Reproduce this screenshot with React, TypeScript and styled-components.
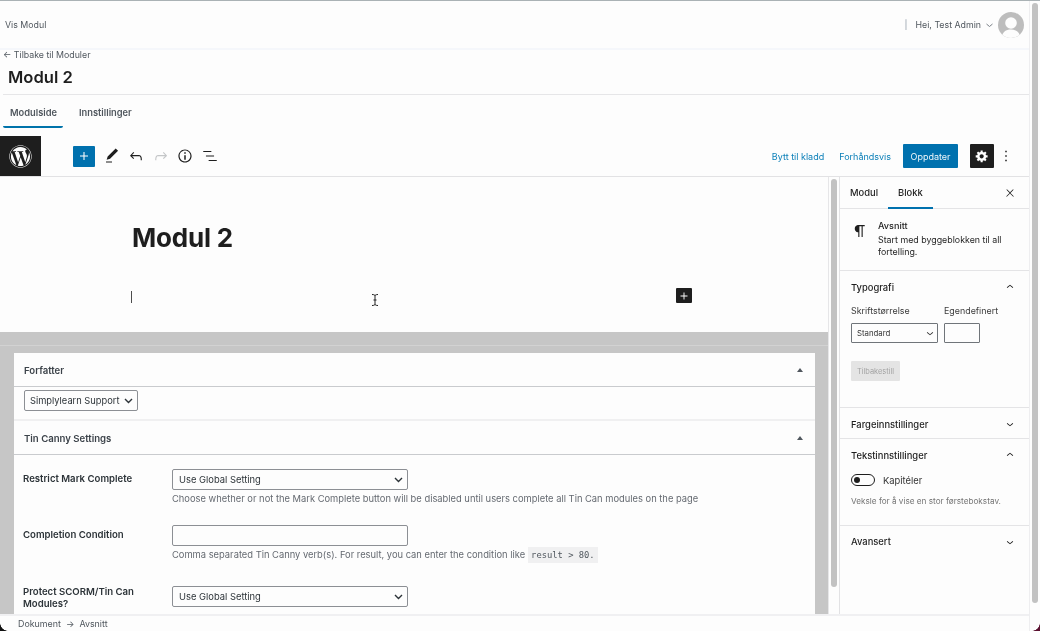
import React from "react";
import styled, { createGlobalStyle } from "styled-components";
import { FaWordpress } from "react-icons/fa";

const Global = createGlobalStyle`
  html, body { margin: 0; padding: 0; background: #fdfdfd; }
  * { box-sizing: border-box; }
  body { font-family: Inter, "Noto Sans", "Liberation Sans", sans-serif; color: #1e1e1e; }
`;

const Shell = styled.div`
  position: relative; width: 1040px; height: 631px; overflow: hidden;
  display: flex; background: #fdfdfd; border-top: 1px solid #aab2b5;
  filter: blur(0.3px);
`;
const Main = styled.div`
  width: 1030px; height: 630px; display: flex; flex-direction: column;
  border-right: 1px solid #eeeef0;
`;
const PageScroll = styled.div`width: 10px; padding: 2px 2px 0 2px;`;
const ScrollThumb = styled.div<{ $h: number }>`
  width: 6px; height: ${p => p.$h}px; background: #c2c2c2; border-radius: 3px;
`;
const TopBar = styled.header`
  height: 49px; flex: none; display: flex; align-items: center; padding: 0 5px;
  font-size: 8.8px; color: #50575e; border-bottom: 2px solid #f5f7fb;
`;
const TopTitle = styled.span`flex: 1;`;
const Pipe = styled.span`color: #8c98a4; margin-right: 8px; font-size: 9px;`;
const Caret = styled.svg`margin: 1px 5px 0 5px; color: #7b8188;`;
const Avatar = styled.svg`display: block; border-radius: 50%;`;
const BackLink = styled.div`
  height: 12px; flex: none; padding: 0 0 0 3px; font-size: 8.8px; line-height: 9px; color: #50575e;
`;
const PostTitle = styled.h1`
  margin: 0 0 0 3px; padding: 3px 0 0 5px; height: 33px; flex: none;
  font-size: 16.6px; line-height: 24px; font-weight: 600; color: #1e1e1e;
  border-bottom: 1px solid #e6e6e8;
`;
const Tabs = styled.nav`
  height: 33px; flex: none; display: flex; padding-left: 3px;
`;
const Tab = styled.div<{ $active?: boolean }>`
  height: 33px; padding: 12px 7px 0; margin-right: 9px; font-size: 9.3px; line-height: 12px; font-weight: 600;
  color: #50575e; width: ${p => (p.$active ? "60px" : "auto")};
  border-bottom: 2px solid ${p => (p.$active ? "#0073aa" : "transparent")};
  border-radius: 0 0 2px 2px;
`;
const Toolbar = styled.div`
  margin-top: 8px; height: 41px; flex: none; display: flex; align-items: center;
  border-bottom: 1px solid #e2e2e4;
`;
const Logo = styled.div`
  width: 41px; height: 40px; background: #1e1e1e; color: #fdfdfd;
  display: flex; align-items: center; justify-content: center; margin-right: 32px;
`;
const Inserter = styled.div`
  width: 22px; height: 21px; background: #0071ae; color: #fff; border-radius: 1px;
  display: flex; align-items: center; justify-content: center; margin-right: 8px;
`;
const ToolIcon = styled.span<{ $muted?: boolean }>`
  width: 18px; height: 18px; display: flex; margin-right: 6.4px;
  color: ${p => (p.$muted ? "#c4c6c8" : "#1e1e1e")};
`;
const Spacer = styled.div`flex: 1;`;
const LinkBtn = styled.span`font-size: 9px; color: #0a7fb8; margin-right: 15px;`;
const Primary = styled.span`
  width: 55px; height: 24px; background: #0071ae; color: #eef6fa; border-radius: 1px; font-size: 9px;
  display: flex; align-items: center; justify-content: center; margin: 0 12px 0 -3px;
`;
const GearBtn = styled.span`
  width: 24px; height: 24px; background: #1e1e1e; color: #fff; border-radius: 1px;
  display: flex; align-items: center; justify-content: center; margin-right: 3px;
`;
const Kebab = styled.span`width: 18px; height: 18px; display: flex; margin-right: 14px; color: #1e1e1e;`;
const Workspace = styled.div`flex: 1; min-height: 0; display: flex;`;
const EditorCol = styled.div`width: 829px; flex: none; overflow: hidden; border-right: 1px solid #e6e6e8; display: flex; flex-direction: column;`;
const Canvas = styled.div`height: 155px; flex: none; position: relative; padding: 47px 0 0 132px;`;
const EditorTitle = styled.h2`
  margin: 0; font-size: 26px; line-height: 28px; font-weight: 700; color: #1e1e1e; letter-spacing: -0.2px;
`;
const TextCaret = styled.div`position: absolute; left: 131px; top: 114px; width: 1px; height: 12px; background: #4d4d4d;`;
const IBeam = styled.svg`position: absolute; left: 371px; top: 117px;`;
const BlockPlus = styled.div`
  position: absolute; left: 676px; top: 111px; width: 16px; height: 15px; background: #1e1e1e; color: #fff;
  border-radius: 1px; display: flex; align-items: center; justify-content: center;
`;
const Metaboxes = styled.div`
  flex: 1; min-height: 0; background: #c6c6c6; padding: 21px 14px 0; overflow: hidden; position: relative;
`;
const MetaLine = styled.div`position: absolute; left: 0; right: 0; top: 13px; height: 1px; background: #d2d2d2;`;
const Card = styled.section`background: #fdfdfd; width: 801px; position: relative;`;
const CardHead = styled.div`
  height: 34px; display: flex; align-items: center; justify-content: space-between; padding: 1px 12px 0 10px;
  font-size: 9.6px; font-weight: 600; color: #3c434a; border-bottom: 1px solid #c9cbce;
`;
const Triangle = styled.i`
  width: 0; height: 0; border: 3px solid transparent; border-top: 0; border-bottom: 4px solid #50575e;
`;
const AuthorBody = styled.div`height: 34px; padding: 3px 10px; border-bottom: 2px solid #f0f0f1;`;
const SelectBox = styled.div<{ $w: number; $h?: number }>`
  width: ${p => p.$w}px; height: ${p => p.$h ?? 21}px; border: 1px solid #8c8f94; border-radius: 2px;
  background: #fdfdfd; display: flex; align-items: center; justify-content: space-between;
  padding: 0 4px 0 6px; font-size: 9.4px; color: #2c3338;
`;
const AuthorSelect = styled(SelectBox)`padding-left: 5px; font-size: 9.3px;`;
const Fields = styled.div`padding: 14px 9px 0;`;
const Field = styled.div<{ $h: number }>`
  display: grid; grid-template-columns: 149px 1fr; height: ${p => p.$h}px;
`;
const FieldLabel = styled.div<{ $top?: number }>`
  font-size: 9.6px; line-height: 12px; font-weight: 600; color: #2c3338; padding-top: ${p => p.$top ?? 4}px; width: 122px;
`;
const TextBox = styled.div`width: 236px; height: 21px; border: 1px solid #8c8f94; border-radius: 2px;`;
const Help = styled.p`margin: 2px 0 0; font-size: 9.35px; line-height: 14px; color: #646970;`;
const Code = styled.code`
  font-family: "DejaVu Sans Mono", "Liberation Mono", monospace; font-size: 8.8px; background: #f0f0f1;
  padding: 3px 3px; margin-left: 3px; color: #50575e;
`;
const Sidebar = styled.aside`
  width: 200px; flex: none; display: flex; flex-direction: column; background: #fdfdfd;
`;
const SideRow = styled.div`display: flex; flex: 1; min-height: 0;`;
const SideScrollTrack = styled.div`width: 10px; flex: none; padding: 2px 2px 0 2px;`;
const SideInner = styled.div`flex: 1; border-left: 1px solid #e2e2e4;`;
const SideTabs = styled.div`
  height: 32px; display: flex; align-items: center; padding: 0 10px; border-bottom: 1px solid #e4e4e6;
`;
const SideTab = styled.div<{ $active?: boolean }>`
  font-size: 9.4px; font-weight: 500; color: #1e1e1e; height: 32px; line-height: 32px; flex: none;
  padding: 0 10px; margin-left: ${p => (p.$active ? "0" : "-10px")};
  border-bottom: ${p => (p.$active ? "2px solid #0071ae" : "none")};
  width: ${p => (p.$active ? "45px" : "auto")};
`;
const CloseIcon = styled.span`margin-left: auto; width: 12px; height: 12px; display: flex; margin-right: 3px;`;
const BlockCard = styled.div`height: 62px; display: flex; padding: 11px 11px 0; border-bottom: 1px solid #e4e4e6;`;
const BlockIcon = styled.span`width: 18px; height: 18px; margin: 2px 9px 0 0; display: flex;`;
const BlockTitle = styled.div`font-size: 9.1px; line-height: 11px; font-weight: 500; margin-bottom: 3px;`;
const BlockDesc = styled.div`font-size: 8.85px; line-height: 12px; color: #1e1e1e; width: 135px;`;
const Panel = styled.div<{ $h: number }>`height: ${p => p.$h}px; border-bottom: 1px solid #e4e4e6; padding: 0 11px;`;
const PanelHead = styled.div`
  height: 31px; display: flex; align-items: center; justify-content: space-between; padding-top: 1px;
  font-size: 9.4px; font-weight: 500; color: #1e1e1e;
`;
const LastHead = styled(PanelHead)`padding: 0 11px;`;
const Chevron = styled.span`width: 14px; height: 14px; display: flex; margin-right: 1px;`;
const FontRow = styled.div`display: flex; gap: 6px; margin-top: 3px;`;
const FontCol = styled.div`display: flex; flex-direction: column;`;
const SmallLabel = styled.label`font-size: 8.9px; line-height: 12px; color: #3c3c3c; margin-bottom: 6px;`;
const FontSelect = styled.div`
  width: 87px; height: 20px; border: 1px solid #70757a; border-radius: 1px; font-size: 7.8px; color: #333;
  display: flex; align-items: center; justify-content: space-between; padding: 0 0 0 5px;
`;
const FontInput = styled.div`width: 36px; height: 20px; border: 1px solid #70757a; border-radius: 1px;`;
const ResetBtn = styled.div`
  margin-top: 18px; width: 49px; height: 20px; background: #e4e4e4; color: #a4a4a4; border-radius: 1px;
  font-size: 7.4px; display: flex; align-items: center; justify-content: center;
`;
const ToggleRow = styled.div`display: flex; align-items: center; gap: 8px; margin-top: 4px; font-size: 9.4px; color: #333;`;
const Toggle = styled.div`
  width: 24px; height: 12px; border: 1px solid #1e1e1e; border-radius: 6px; position: relative; background: #fdfdfd;
`;
const Knob = styled.i`position: absolute; left: 2px; top: 2px; width: 6px; height: 6px; border-radius: 50%; background: #1e1e1e;`;
const PanelHelp = styled.p`margin: 10px 0 0; font-size: 8.2px; line-height: 11px; color: #757575;`;
const StatusBar = styled.footer`
  height: 17px; flex: none; background: #fdfdfd; border-top: 2px solid #f0f0f2; padding-left: 18px;
  display: flex; align-items: center; font-size: 8.9px; color: #50575e; gap: 5px;
`;
const Corner = styled.i<{ $right?: boolean }>`
  position: absolute; bottom: 0; width: 8px; height: 8px;
  ${p => (p.$right
    ? `right: 0; background: radial-gradient(circle at 0 0, transparent 7.5px, #5a1030 8px);`
    : `left: 0; background: radial-gradient(circle at 100% 0, transparent 7.5px, #111 8px);`)}
`;

type IconProps = { d: string; size?: number; box?: number };
const Icon = ({ d, size = 18, box = 24 }: IconProps) => (
  <svg width={size} height={size} viewBox={`0 0 ${box} ${box}`} fill="currentColor"><path d={d} /></svg>
);
const P = {
  plus: "M18 11.2h-5.2V6h-1.6v5.2H6v1.6h5.2V18h1.6v-5.2H18z",
  edit: "M20.1 5.1L16.9 2 6.2 12.7l-1.3 4.4 4.5-1.3L20.1 5.1zM4 20.8h8v-1.5H4v1.5z",
  undo: "M18.3 11.7c-.6-.6-1.4-.9-2.3-.9H6.7l2.9-3.3-1.1-1-4.5 5L8.5 16l1-1-2.7-2.7H16c.5 0 .9.2 1.3.5 1 1 1 3.4 1 4.5v.3h1.5v-.2c0-1.5 0-4.3-1.5-5.7z",
  redo: "M15.6 6.5l-1.1 1 2.9 3.3H8c-.9 0-1.7.3-2.3.9-1.4 1.5-1.4 4.2-1.4 5.6v.2h1.5v-.3c0-1.1 0-3.5 1-4.5.3-.3.7-.5 1.3-.5h9.2L14.5 15l1.1 1.1 4.6-4.6-4.6-5z",
  info: "M12 3.2c-4.8 0-8.8 3.9-8.8 8.8 0 4.8 3.9 8.8 8.8 8.8 4.8 0 8.8-3.9 8.8-8.8 0-4.8-4-8.8-8.8-8.8zm0 16c-4 0-7.2-3.3-7.2-7.2C4.8 8 8 4.8 12 4.8s7.2 3.3 7.2 7.2c0 4-3.2 7.2-7.2 7.2zM11 17h2v-6h-2v6zm0-8h2V7h-2v2z",
  list: "M13.8 5.2H3v1.5h10.8V5.2zm-3.6 12v1.5H21v-1.5H10.2zm7.2-6H6.6v1.5h10.8v-1.5z",
  cog: "M18 12h-2.18c-.17.7-.44 1.35-.81 1.93l1.54 1.54-2.1 2.1-1.54-1.54c-.58.36-1.23.63-1.91.79V19H8v-2.18c-.68-.16-1.33-.43-1.91-.79l-1.54 1.54-2.12-2.12 1.54-1.54c-.36-.58-.63-1.23-.79-1.91H1V9.03h2.17c.16-.7.44-1.35.8-1.94L2.43 5.55l2.1-2.1 1.54 1.54c.58-.37 1.24-.64 1.93-.81V2h3v2.18c.68.16 1.33.43 1.91.79l1.54-1.54 2.12 2.12-1.54 1.54c.36.59.64 1.24.8 1.94H18V12zm-8.5 1.5c1.66 0 3-1.34 3-3s-1.34-3-3-3-3 1.34-3 3 1.34 3 3 3z",
  more: "M13 19h-2v-2h2v2zm0-6h-2v-2h2v2zm0-6h-2V5h2v2z",
  close: "M13 11.8l6.1-6.3-1-1-6.1 6.2-6.1-6.2-1 1 6.1 6.3-6.5 6.7 1 1 6.5-6.6 6.5 6.6 1-1z",
  para: "M18.3 4H9.9v-.1l-.9.2c-2.3.4-4 2.4-4 4.8s1.7 4.4 4 4.8l.7.1V20h1.5V5.5h2.9V20h1.5V5.5h2.7V4z",
  up: "M6.5 12.4L12 8l5.5 4.4-.9 1.2L12 10l-4.5 3.6-1-1.2z",
  down: "M17.5 11.6L12 16l-5.5-4.4.9-1.2L12 14l4.5-3.6 1 1.2z",
};

const Up = () => <Chevron><Icon d={P.up} size={14} /></Chevron>;
const Down = () => <Chevron><Icon d={P.down} size={14} /></Chevron>;
const SelectChevron = () => (
  <svg width="9" height="6" viewBox="0 0 9 6" fill="none" stroke="#2c3338" strokeWidth="1.4"><path d="M1 1l3.500 3.500L8 1" /></svg>
);

export default function App() {
  return (
    <>
      <Global />
      <Shell>
        <Main>
          <TopBar>
            <TopTitle>Vis Modul</TopTitle>
            <Pipe>|</Pipe>
            <span>Hei, Test Admin</span>
            <Caret width="7" height="5" viewBox="0 0 7 5" fill="none" stroke="currentColor"><path d="M.5 1l3 2.500L6.500 1" /></Caret>
            <Avatar width="26" height="26" viewBox="0 0 26 26">
              <rect width="26" height="26" fill="#bdbdbd" />
              <circle cx="13" cy="11" r="5.8" fill="#fdfdfd" />
              <path d="M3.500 26c.5-6 4.500-8.500 9.500-8.500s9 2.500 9.500 8.500z" fill="#fdfdfd" />
            </Avatar>
          </TopBar>
          <BackLink>← Tilbake til Moduler</BackLink>
          <PostTitle>Modul 2</PostTitle>
          <Tabs>
            <Tab $active>Modulside</Tab>
            <Tab>Innstillinger</Tab>
          </Tabs>
          <Toolbar>
            <Logo><FaWordpress size={23} /></Logo>
            <Inserter><Icon d={P.plus} size={16} /></Inserter>
            <ToolIcon><Icon d={P.edit} /></ToolIcon>
            <ToolIcon><Icon d={P.undo} /></ToolIcon>
            <ToolIcon $muted><Icon d={P.redo} /></ToolIcon>
            <ToolIcon><Icon d={P.info} /></ToolIcon>
            <ToolIcon><Icon d={P.list} /></ToolIcon>
            <Spacer />
            <LinkBtn>Bytt til kladd</LinkBtn>
            <LinkBtn>Forhåndsvis</LinkBtn>
            <Primary>Oppdater</Primary>
            <GearBtn><Icon d={P.cog} size={14} box={20} /></GearBtn>
            <Kebab><Icon d={P.more} /></Kebab>
          </Toolbar>
          <Workspace>
            <EditorCol>
              <Canvas>
                <EditorTitle>Modul 2</EditorTitle>
                <TextCaret />
                <IBeam width="8" height="12" viewBox="0 0 8 12" fill="none" stroke="#222" strokeWidth="1">
                  <path d="M1 .5c2 0 3 .5 3 1.500v8c0 1-1 1.500-3 1.500M7 .5c-2 0-3 .5-3 1.500M7 11.500c-2 0-3-.5-3-1.500M2.500 6h3" />
                </IBeam>
                <BlockPlus><Icon d={P.plus} size={14} /></BlockPlus>
              </Canvas>
              <Metaboxes>
                <MetaLine />
                <Card>
                  <CardHead>Forfatter<Triangle /></CardHead>
                  <AuthorBody>
                    <AuthorSelect $w={114}>Simplylearn Support<SelectChevron /></AuthorSelect>
                  </AuthorBody>
                  <CardHead>Tin Canny Settings<Triangle /></CardHead>
                  <Fields>
                    <Field $h={56}>
                      <FieldLabel>Restrict Mark Complete</FieldLabel>
                      <div>
                        <SelectBox $w={236}>Use Global Setting<SelectChevron /></SelectBox>
                        <Help>Choose whether or not the Mark Complete button will be disabled until users complete all Tin Can modules on the page</Help>
                      </div>
                    </Field>
                    <Field $h={61}>
                      <FieldLabel>Completion Condition</FieldLabel>
                      <div>
                        <TextBox />
                        <Help>Comma separated Tin Canny verb(s). For result, you can enter the condition like<Code>result &gt; 80.</Code></Help>
                      </div>
                    </Field>
                    <Field $h={40}>
                      <FieldLabel $top={0}>Protect SCORM/Tin Can Modules?</FieldLabel>
                      <div>
                        <SelectBox $w={236}>Use Global Setting<SelectChevron /></SelectBox>
                      </div>
                    </Field>
                  </Fields>
                </Card>
              </Metaboxes>
            </EditorCol>
            <Sidebar>
              <SideRow>
                <SideScrollTrack><ScrollThumb $h={408} /></SideScrollTrack>
                <SideInner>
                  <SideTabs>
                    <SideTab>Modul</SideTab>
                    <SideTab $active>Blokk</SideTab>
                    <CloseIcon><Icon d={P.close} size={12} /></CloseIcon>
                  </SideTabs>
                  <BlockCard>
                    <BlockIcon><Icon d={P.para} size={18} /></BlockIcon>
                    <div>
                      <BlockTitle>Avsnitt</BlockTitle>
                      <BlockDesc>Start med byggeblokken til all fortelling.</BlockDesc>
                    </div>
                  </BlockCard>
                  <Panel $h={137}>
                    <PanelHead>Typografi<Up /></PanelHead>
                    <FontRow>
                      <FontCol>
                        <SmallLabel>Skriftstørrelse</SmallLabel>
                        <FontSelect>Standard<Icon d={P.down} size={14} /></FontSelect>
                      </FontCol>
                      <FontCol>
                        <SmallLabel>Egendefinert</SmallLabel>
                        <FontInput />
                      </FontCol>
                    </FontRow>
                    <ResetBtn>Tilbakestill</ResetBtn>
                  </Panel>
                  <Panel $h={31}>
                    <PanelHead>Fargeinnstillinger<Down /></PanelHead>
                  </Panel>
                  <Panel $h={87}>
                    <PanelHead>Tekstinnstillinger<Up /></PanelHead>
                    <ToggleRow><Toggle><Knob /></Toggle>Kapitéler</ToggleRow>
                    <PanelHelp>Veksle for å vise en stor førstebokstav.</PanelHelp>
                  </Panel>
                  <LastHead>Avansert<Down /></LastHead>
                </SideInner>
              </SideRow>
            </Sidebar>
          </Workspace>
          <StatusBar>Dokument <span>→</span> Avsnitt</StatusBar>
        </Main>
        <PageScroll><ScrollThumb $h={600} /></PageScroll>
        <Corner />
        <Corner $right />
      </Shell>
    </>
  );
}
